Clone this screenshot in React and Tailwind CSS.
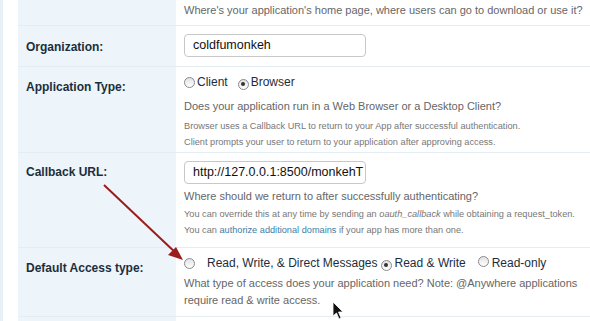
import React from 'react';

const Radio = ({ checked }) => (
  <span className="inline-flex items-center justify-center w-[11px] h-[11px] rounded-full border border-[#8a8a8a] bg-gradient-to-b from-[#e2e2e2] to-[#ffffff] shrink-0">
    {checked && <span className="w-[4px] h-[4px] rounded-full bg-[#333]" />}
  </span>
);

const Row = ({ label, height, labelPt, contentPt, children }) => (
  <div className="flex border-b border-[#e3edf4]" style={{ height }}>
    <div className="w-[158px] shrink-0 bg-[#edf5fa] pl-[8px]" style={{ paddingTop: labelPt }}>
      {label && (
        <span className="text-[12px] leading-[16px] font-bold text-[#1c2e3c]">{label}</span>
      )}
    </div>
    <div className="flex-1 pl-[8px] bg-white" style={{ paddingTop: contentPt }}>
      {children}
    </div>
  </div>
);

const Desc = ({ children, className = '' }) => (
  <p className={`text-[11px] leading-[16px] text-[#666] ${className}`}>{children}</p>
);

const Small = ({ children }) => (
  <p className="text-[9.2px] leading-[16px] text-[#777]">{children}</p>
);

const TextBox = ({ value }) => (
  <div className="w-[182px] h-[23px] rounded-[4px] border border-[#c8c8c8] bg-white flex items-center pl-[8px] overflow-hidden whitespace-nowrap">
    <span className="text-[12.5px] text-[#111]">{value}</span>
  </div>
);

export default function App() {
  return (
    <div className="relative w-[590px] h-[321px] overflow-hidden bg-white flex" style={{ fontFamily: '"Liberation Sans", Arial, sans-serif' }}>
      <div className="w-[3px] bg-[#e6f0f6]" />
      <div className="w-[15px] bg-white" />
      <div className="flex-1 flex flex-col">
        <Row height={26} labelPt={0} contentPt={2}>
          <Desc>Where's your application's home page, where users can go to download or use it?</Desc>
        </Row>
        <Row label="Organization:" height={41} labelPt={8} contentPt={8}>
          <TextBox value="coldfumonkeh" />
        </Row>
        <Row label="Application Type:" height={86} labelPt={7} contentPt={7}>
          <div className="flex items-center h-[16px] text-[12px] text-[#1c2e3c]">
            <Radio />
            <span className="ml-[2px]">Client</span>
            <span className="ml-[10px]"><Radio checked /></span>
            <span className="ml-[2px]">Browser</span>
          </div>
          <Desc className="mt-[8px]">Does your application run in a Web Browser or a Desktop Client?</Desc>
          <div className="mt-[4px]">
            <Small>Browser uses a Callback URL to return to your App after successful authentication.</Small>
            <Small>Client prompts your user to return to your application after approving access.</Small>
          </div>
        </Row>
        <Row label="Callback URL:" height={95} labelPt={6} contentPt={8}>
          <TextBox value="http://127.0.0.1:8500/monkehT" />
          <Desc className="mt-[4px]">Where should we return to after successfully authenticating?</Desc>
          <div className="mt-[2px]">
            <Small>
              You can override this at any time by sending an <i>oauth_callback</i> while obtaining a request_token.
            </Small>
            <Small>
              You can <span className="text-[#3d7ea6]">authorize additional domains</span> if your app has more than one.
            </Small>
          </div>
        </Row>
        <Row label="Default Access type:" height={69} labelPt={7} contentPt={7}>
          <div className="flex items-center h-[16px] text-[12px] text-[#1c2e3c]">
            <Radio />
            <span className="ml-[12px]">Read, Write, &amp; Direct Messages</span>
            <span className="ml-[3px]"><Radio checked /></span>
            <span className="ml-[3px]">Read &amp; Write</span>
            <span className="ml-[12px]"><Radio /></span>
            <span className="ml-[3px]">Read-only</span>
          </div>
          <Desc className="mt-[4px] leading-[17px]">
            What type of access does your application need? Note: @Anywhere applications require read &amp; write access.
          </Desc>
        </Row>
        <div className="flex flex-1">
          <div className="w-[158px] bg-[#edf5fa]" />
          <div className="flex-1 bg-white" />
        </div>
      </div>

      <svg className="absolute left-0 top-0 pointer-events-none" width="590" height="321">
        <line x1="104" y1="185" x2="178" y2="255" stroke="#9b1c1c" strokeWidth="2" />
        <polygon points="183,260 168,255 176,247" fill="#9b1c1c" />
        <path d="M333 302 L333 316 L336.5 313 L339 319 L341 318 L338.5 312 L343 312 Z" fill="#111" stroke="#fff" strokeWidth="0.8" />
      </svg>
    </div>
  );
}
